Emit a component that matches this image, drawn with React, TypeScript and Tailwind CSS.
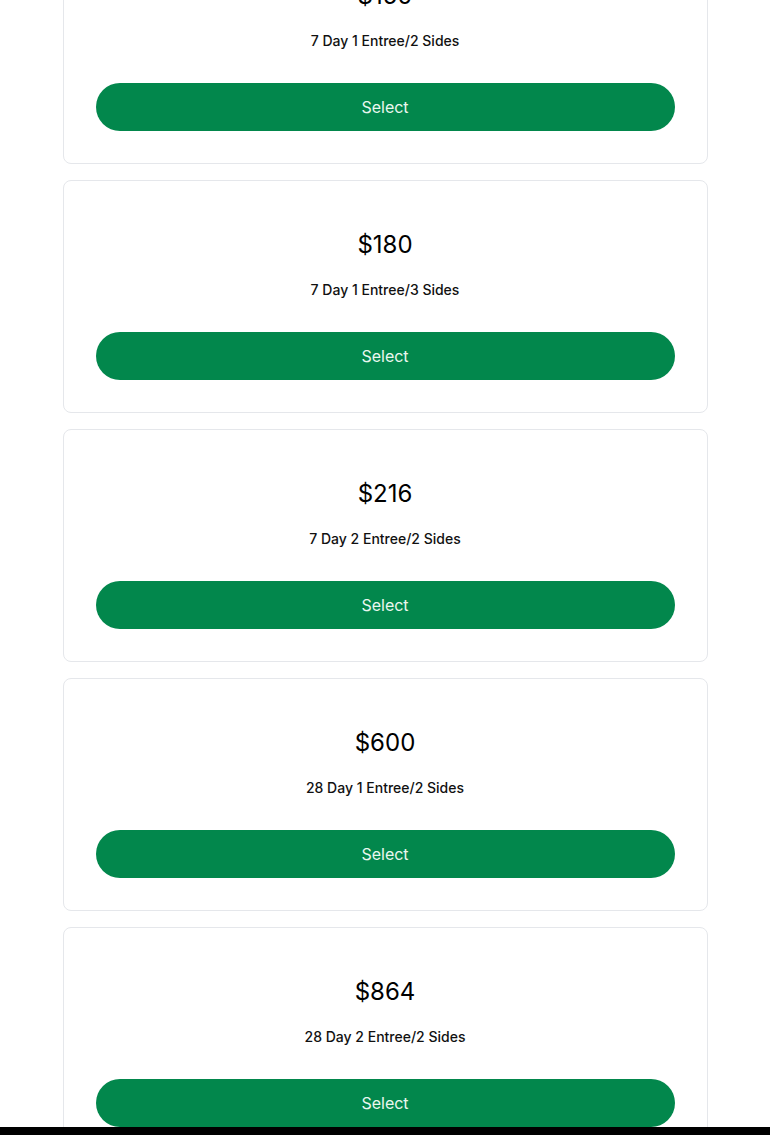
const plans = [
  { price: "$150", label: "7 Day 1 Entree/2 Sides" },
  { price: "$180", label: "7 Day 1 Entree/3 Sides" },
  { price: "$216", label: "7 Day 2 Entree/2 Sides" },
  { price: "$600", label: "28 Day 1 Entree/2 Sides" },
  { price: "$864", label: "28 Day 2 Entree/2 Sides" },
  { price: "$1080", label: "28 Day 2 Entree/3 Sides" },
] as const

function PlanCard({ price, label }: { price: string; label: string }) {
  return (
    <div className="bg-white border border-[#e5e7eb] rounded-lg px-8 pt-12 pb-8 flex flex-col items-center">
      <p className="text-[24px] leading-8 text-black">{price}</p>
      <p className="mt-[19px] text-[14px] leading-5 font-medium text-[#111]">{label}</p>
      <button className="mt-8 w-full h-12 rounded-full bg-[#02874c] text-[#eaf7ef] text-[16px]">
        Select
      </button>
    </div>
  )
}

export default function App() {
  return (
    <div className="min-h-screen bg-white font-['Inter',sans-serif] overflow-hidden">
      <div className="w-[645px] mx-auto -mt-[69px] flex flex-col gap-4 pb-8">
        {plans.map((p) => (
          <PlanCard key={p.price} price={p.price} label={p.label} />
        ))}
      </div>
      <div className="fixed bottom-0 left-0 right-0 h-2 bg-black" />
    </div>
  )
}
